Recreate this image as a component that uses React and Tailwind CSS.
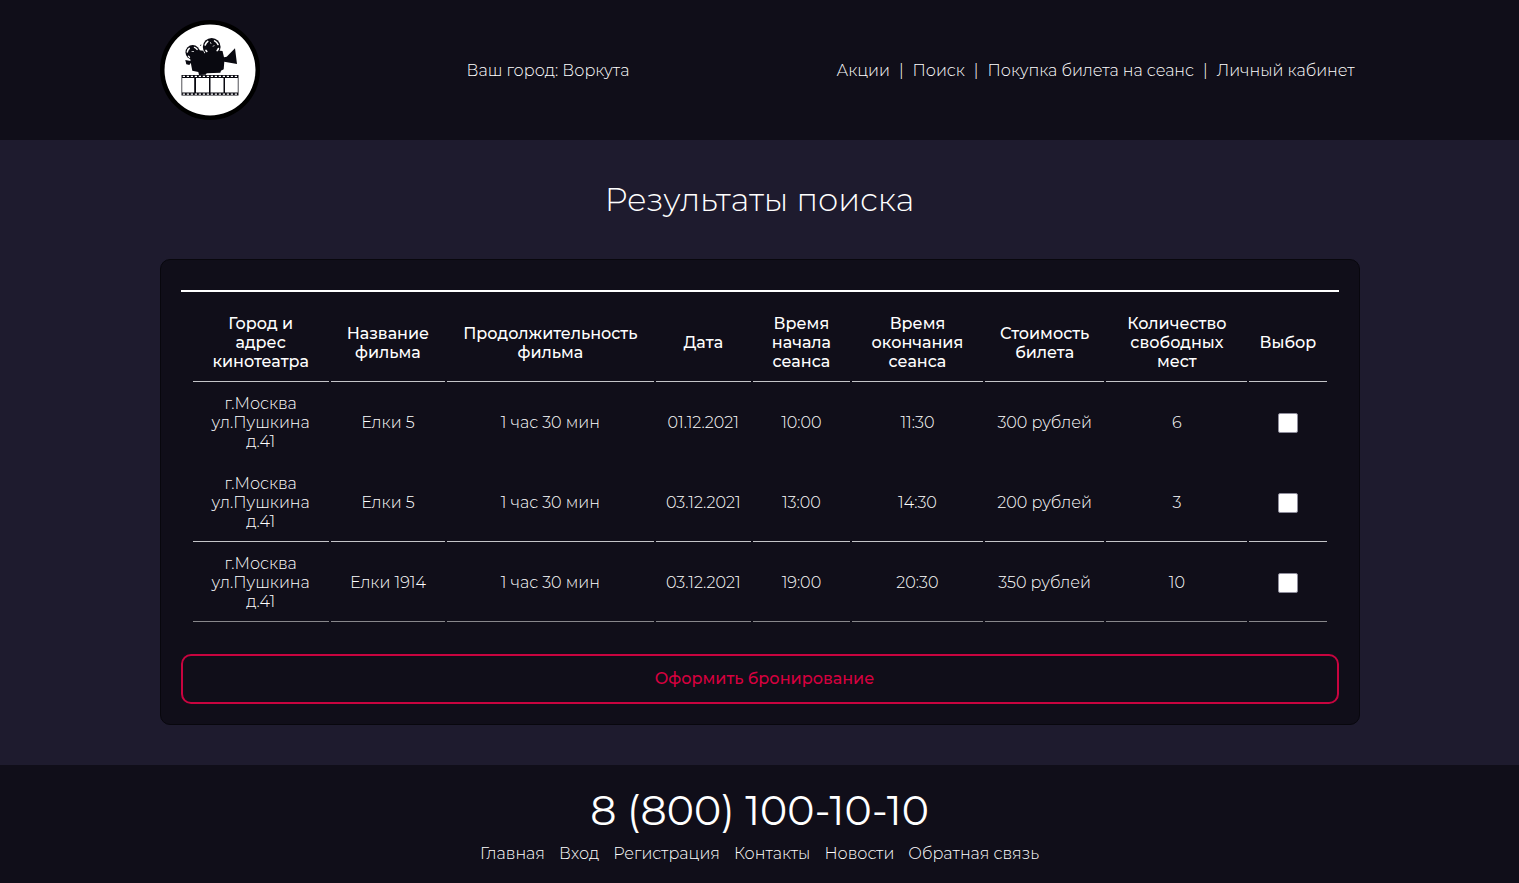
const navLinks = ["Акции", "Поиск", "Покупка билета на сеанс", "Личный кабинет"];
const footerLinks = ["Главная", "Вход", "Регистрация", "Контакты", "Новости", "Обратная связь"];

const columns = [
  { lines: ["Город и", "адрес", "кинотеатра"], width: "w-[12.2%]" },
  { lines: ["Название", "фильма"], width: "w-[10.2%]" },
  { lines: ["Продолжительность", "фильма"], width: "w-[18.5%]" },
  { lines: ["Дата"], width: "w-[8.5%]" },
  { lines: ["Время", "начала", "сеанса"], width: "w-[8.7%]" },
  { lines: ["Время", "окончания", "сеанса"], width: "w-[11.7%]" },
  { lines: ["Стоимость", "билета"], width: "w-[10.7%]" },
  { lines: ["Количество", "свободных", "мест"], width: "w-[12.6%]" },
  { lines: ["Выбор"], width: "w-[6.9%]" },
];

const address = ["г.Москва", "ул.Пушкина", "д.41"];
const sessions = [
  { cells: ["Елки 5", "1 час 30 мин", "01.12.2021", "10:00", "11:30", "300 рублей", "6"], border: "border-transparent" },
  { cells: ["Елки 5", "1 час 30 мин", "03.12.2021", "13:00", "14:30", "200 рублей", "3"], border: "border-[#c4c4c8]" },
  { cells: ["Елки 1914", "1 час 30 мин", "03.12.2021", "19:00", "20:30", "350 рублей", "10"], border: "border-[#88878b]" },
];

function Lines({ items }) {
  return items.map((text) => (
    <span key={text} className="block">
      {text}
    </span>
  ));
}

function Logo() {
  const holes = Array.from({ length: 14 }, (_, i) => 22.8 + i * 4);
  return (
    <svg viewBox="0 0 100 100" className="size-[100px]" role="img" aria-label="Кинотеатр">
      <circle cx="50" cy="50" r="50" fill="#000" />
      <circle cx="50" cy="50" r="45.5" fill="#fff" />
      <g fill="#090910">
        <circle cx="32.7" cy="32.3" r="7.2" />
        <circle cx="51.7" cy="26.9" r="8.9" />
        <path d="M37 30 L43.3 30.7 L44.3 33.3 L60 30.7 L62.5 31 L64 37.3 L66.7 36.7 L75 28.3 L77 44 L64.3 41.7 L63.7 49.3 L61 50.7 L60.3 52.7 L46.7 53.3 L45.7 54.7 L39 55 L38.3 52 L32.3 50.7 L31 44 L30.3 43 L29.5 45 L26.3 44.3 L25.3 40 L30.5 41 L30 37 Z" />
        <path d="M21.5 55h57v20.5h-57z" />
      </g>
      <g fill="none" stroke="#fff" strokeLinecap="round">
        <path d="M27.3 32a5.5 5.5 0 0 1 2-3.6M34.5 27.4a5 5 0 0 1 2.6 2" strokeWidth="1.5" />
        <path d="M28.5 36.2l1 1" strokeWidth="1.3" />
        <path d="M45.2 25a7 7 0 0 1 2.6-3.6M54.6 20.9a7 7 0 0 1 3.4 3.6M58.4 28.6a7 7 0 0 1-1.2 2M46 30.4l.8 1" strokeWidth="1.6" />
        <path d="M50.5 22.5l.5 1.2M53 26.2l1.2-.5M32 31.5h1.6" strokeWidth=".7" />
      </g>
      <path d="M40 25.5l1.3-.5" stroke="#090910" strokeWidth=".8" />
      <g fill="#fff">
        <path d="M22.2 58h12v14.5h-12zM36 58h13v14.5H36zM50.5 58h13v14.5h-13zM65 58h12.8v14.5H65z" />
        {holes.map((x) => (
          <path key={x} d={`M${x} 55.7h2.2v1.4h-2.2zM${x} 73.4h2.2v1.4h-2.2z`} />
        ))}
      </g>
    </svg>
  );
}

export default function App() {
  return (
    <div className="flex min-h-screen flex-col bg-[#1e1b2e] font-['Montserrat','Inter',sans-serif] text-base font-light text-white">
      <header className="bg-[#100e19] px-5 py-5 leading-[19px]">
        <div className="mx-auto flex max-w-[1200px] items-center justify-between">
          <a href="#" className="shrink-0">
            <Logo />
          </a>
          <p>Ваш город: Воркута</p>
          <nav className="flex items-center gap-[9px] pr-[5px]">
            {navLinks.map((text, i) => (
              <div key={text} className="flex gap-[9px]">
                {i > 0 && <span aria-hidden="true">|</span>}
                <a href="#">{text}</a>
              </div>
            ))}
          </nav>
        </div>
      </header>

      <main className="grow px-5 pt-10 pb-10">
        <h1 className="text-center text-[32px] leading-10 font-light">Результаты поиска</h1>
        <form
          className="mx-auto mt-[39px] max-w-[1200px] rounded-[10px] border border-[#08070d] bg-[#100e19] px-5 pt-[30px] pb-5"
          onSubmit={(e) => e.preventDefault()}
        >
          <div className="border-t-2 border-white px-[10px] pt-[10px]">
            <table className="w-full table-fixed border-separate border-spacing-[2px] text-center leading-[19px]">
              <thead>
                <tr>
                  {columns.map((c) => (
                    <th key={c.lines.join(" ")} scope="col" className={`${c.width} border-b border-[#c4c4c8] py-[10px] font-medium whitespace-nowrap`}>
                      <Lines items={c.lines} />
                    </th>
                  ))}
                </tr>
              </thead>
              <tbody>
                {sessions.map((s, row) => (
                  <tr key={row}>
                    <td className={`border-b py-[10px] ${s.border}`}>
                      <Lines items={address} />
                    </td>
                    {s.cells.map((text, i) => (
                      <td key={i} className={`border-b whitespace-nowrap ${s.border}`}>
                        {text}
                      </td>
                    ))}
                    <td className={`border-b ${s.border}`}>
                      <input
                        type="checkbox"
                        aria-label={`Выбрать сеанс: ${s.cells[0]}, ${s.cells[2]}, ${s.cells[3]}`}
                        className="mx-auto block size-5 appearance-none rounded-[2px] border border-[#8f8d9c] bg-white checked:bg-[#d6003f]"
                      />
                    </td>
                  </tr>
                ))}
              </tbody>
            </table>
          </div>
          <button type="submit" className="mt-[30px] h-[50px] w-full rounded-[10px] border-2 border-[#c8043f] pl-[10px] font-medium text-[#d6003f]">
            Оформить бронирование
          </button>
        </form>
      </main>

      <footer className="bg-[#100e19] px-5 pt-5 pb-[18px] text-center">
        <p className="text-[41px] leading-[50px] font-normal">8 (800) 100-10-10</p>
        <nav className="mt-2 flex flex-wrap justify-center gap-x-[14px] leading-[22px]">
          {footerLinks.map((text) => (
            <a key={text} href="#">
              {text}
            </a>
          ))}
        </nav>
      </footer>
    </div>
  );
}
